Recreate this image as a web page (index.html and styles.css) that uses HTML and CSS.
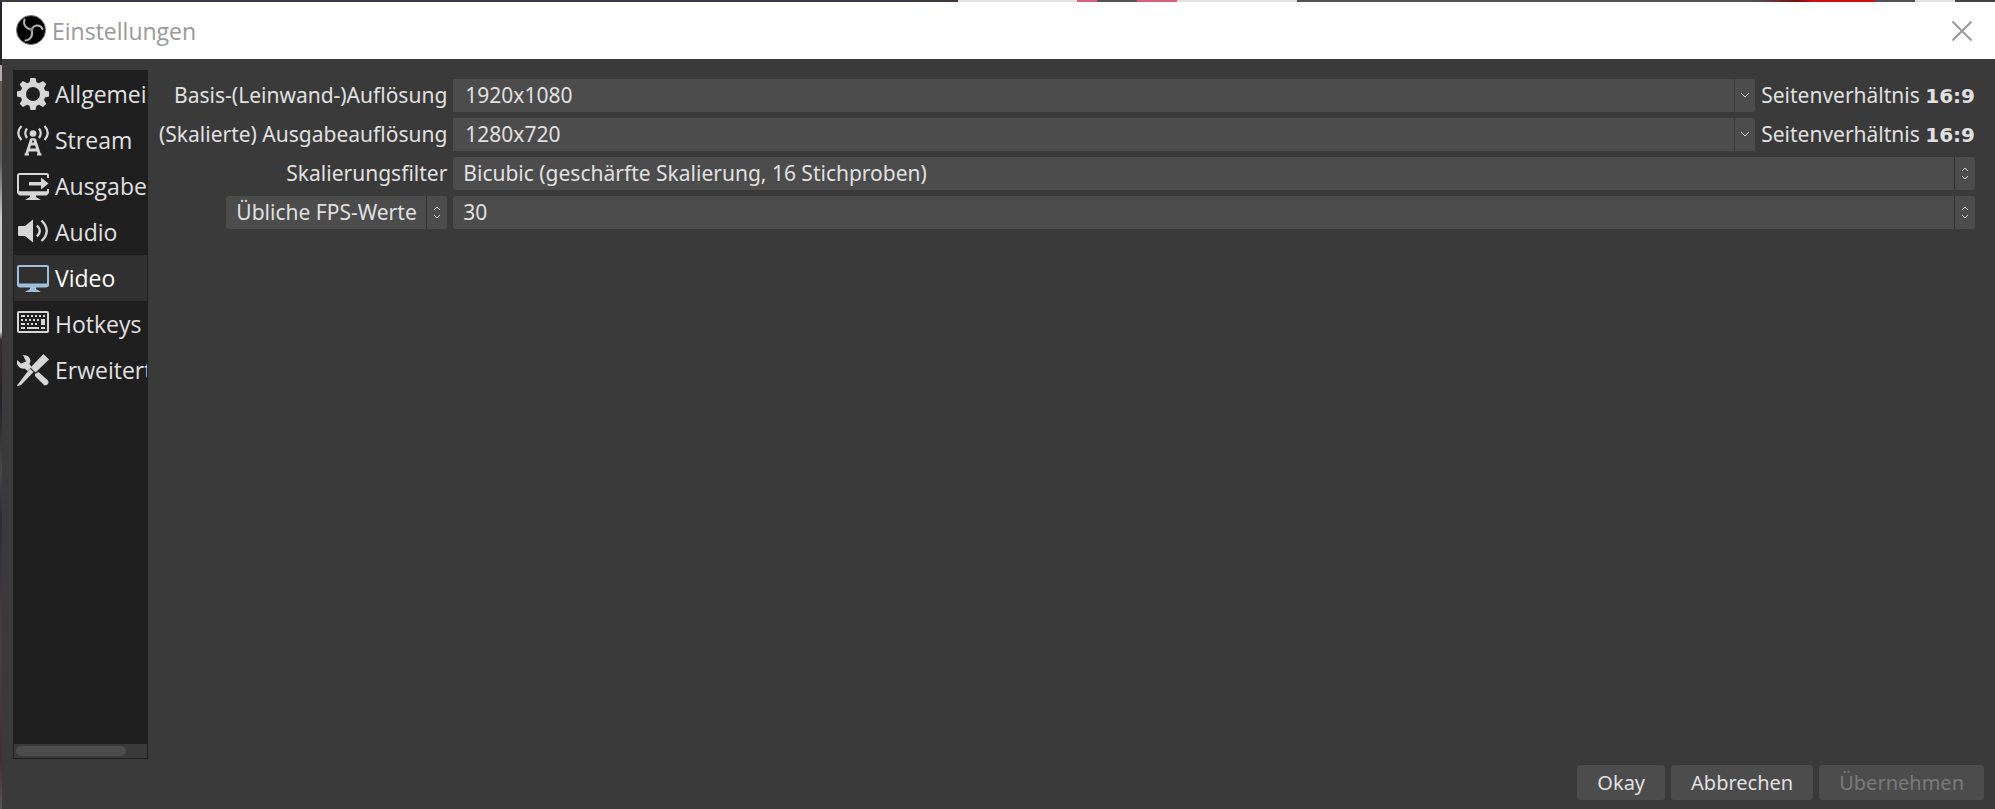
FILE: index.html
```html
<!DOCTYPE html>
<html lang="de">
<head>
  <meta charset="UTF-8" />
  <meta name="viewport" content="width=device-width, initial-scale=1.0"/>
  <title>Einstellungen</title>
  <link rel="stylesheet" href="styles.css">
</head>
<body>

  <header class="titlebar">
    <svg class="logo" viewBox="0 0 32 32" aria-hidden="true">
      <circle cx="16" cy="15" r="14.500" fill="#000" stroke="#777" stroke-width="1"/>
      <g fill="none" stroke="#b4b4b4" stroke-width="2" stroke-linecap="round">
        <path d="M9.500 4.500c-1.500 5 1 9 7 10"/>
        <path d="M27.500 14c-2-4.500-8-5-11 .5"/>
        <path d="M16.500 14.500c2 6-1 10.500-6 11"/>
      </g>
      <circle cx="16.500" cy="14.500" r="2" fill="#888"/>
    </svg>
    <h1>Einstellungen</h1>
    <button type="button" class="close" aria-label="Schließen">
      <svg viewBox="0 0 20 20"><path d="M.5.5l19 19M19.500.5l-19 19"/></svg>
    </button>
  </header>

  <div class="content">
    <nav class="sidebar">
      <ul>
        <li><a href="#allgemein">
          <svg viewBox="0 0 32 32">
            <path fill-rule="evenodd" d="M13.500 0h5l1 4.300 2.500 1L26 3l3.300 3.300L27 10l1 2.500 4 1v5l-4 1L27 22l2.300 3.700L26 29l-4-2.300-2.500 1-1 4.300h-5l-1-4.300-2.500-1L6 29l-3.300-3.300L5 22l-1-2.500-4-1v-5l4-1L5 10 2.700 6.300 6 3l4 2.300 2.500-1zM16 9a7 7 0 1 0 0 14 7 7 0 0 0 0-14z"/>
          </svg>Allgemein</a></li>
        <li><a href="#stream">
          <svg viewBox="0 0 32 32">
            <circle cx="16" cy="9.500" r="3.300"/>
            <path class="line" d="M14.500 15L9.500 30.500M17.500 15l5 15.500M13.500 20h5M12 26h8" stroke-width="2.800"/>
            <path class="line" d="M14 15.300h4M7.500 30.500h4.500M20 30.500h4.500" stroke-width="2"/>
            <path class="line" d="M10 4.500q-3.500 4.500 0 9.500M22 4.500q3.500 4.500 0 9.500M4.500 2q-6.500 7 0 14M27.500 2q6.500 7 0 14" stroke-width="2.200"/>
          </svg>Stream</a></li>
        <li><a href="#ausgabe">
          <svg viewBox="0 0 32 32">
            <path class="line" d="M31 8V5.500Q31 4 29.500 4h-27Q1 4 1 5.500v17h30V19" stroke-width="2"/>
            <path d="M1 21.500h30v2q0 2-2 2H3q-2 0-2-2zM13 25h6v2l5 3H8l5-3zM12 12h12V7.500l7.500 6-7.500 6V15.500H12z"/>
          </svg>Ausgabe</a></li>
        <li><a href="#audio">
          <svg viewBox="0 0 32 32">
            <path d="M1 11q0-1 1-1h6l8-6.500v23L8 20H2q-1 0-1-1z"/>
            <path class="line" d="M20 9.500q5.500 5.500 0 11M24.500 4.500q10.500 10.500 0 20.500" stroke-width="2.400"/>
          </svg>Audio</a></li>
        <li><a href="#video" class="active" aria-current="page">
          <svg viewBox="0 0 32 32">
            <rect class="line" x="1" y="4" width="30" height="20" rx="1" stroke-width="2"/>
            <path d="M1 21.500h30v2q0 2-2 2H3q-2 0-2-2zM13 25h6v2l5 3H8l5-3z"/>
          </svg>Video</a></li>
        <li><a href="#hotkeys">
          <svg viewBox="0 0 32 32">
            <rect class="line" x="1" y="4" width="30" height="20" rx="1" stroke-width="2"/>
            <path class="line" d="M4 8h4m2 0h2m2 0h2m2 0h2m2 0h2m2 0h2M4 12h2m2 0h2m2 0h2m2 0h2m2 0h2m2 0h2M4 16h4m2 0h2m2 0h2m2 0h2m4 0h2M4 20h4m2 0h12m2 0h4" stroke-width="2"/>
            <path d="M24 11h4v6h-4z"/>
          </svg>Hotkeys</a></li>
        <li><a href="#erweitert">
          <svg viewBox="0 0 32 32">
            <path d="M26.500 0L32 5.500l-13.500 13-5-5zM18 20l3.500-2L31 26.500q2 4-3.500 5l-9.500-9.500z"/>
            <path d="M13 14.500l3.500 3.500L4 31l-3.500 1L0 31.500z"/>
            <path d="M6 1q7 0 7.500 6l-1 3 2 3-4 4-3-2.500q-5 1-7.500-4.500V6l4 3.500 5-2z"/>
          </svg>Erweitert</a></li>
      </ul>
      <div class="scrollbar"><div class="thumb"></div></div>
    </nav>

    <form id="videoForm" class="settings">
      <label for="baseRes">Basis-(Leinwand-)Auflösung</label>
      <div class="row">
        <div class="combo">
          <input type="text" id="baseRes" value="1920x1080">
          <button type="button" aria-label="Auflösung auswählen"><svg viewBox="0 0 20 33"><path d="M6 14l4 4 4-4"/></svg></button>
        </div>
        <span>Seitenverhältnis <b>16:9</b></span>
      </div>

      <label for="outputRes">(Skalierte) Ausgabeauflösung</label>
      <div class="row">
        <div class="combo">
          <input type="text" id="outputRes" value="1280x720">
          <button type="button" aria-label="Auflösung auswählen"><svg viewBox="0 0 20 33"><path d="M6 14l4 4 4-4"/></svg></button>
        </div>
        <span>Seitenverhältnis <b>16:9</b></span>
      </div>

      <label for="filter">Skalierungsfilter</label>
      <div class="dropdown">
        <select id="filter">
          <option>Bicubic (geschärfte Skalierung, 16 Stichproben)</option>
        </select>
        <svg viewBox="0 0 20 33"><path d="M7 14l3-3 3 3M7 19l3 3 3-3"/></svg>
      </div>

      <div class="dropdown fps-type">
        <select id="fpsType" aria-label="FPS-Typ">
          <option>Übliche FPS-Werte</option>
        </select>
        <svg viewBox="0 0 20 33"><path d="M7 14l3-3 3 3M7 19l3 3 3-3"/></svg>
      </div>
      <div class="dropdown">
        <select id="fps" aria-label="FPS">
          <option>30</option>
        </select>
        <svg viewBox="0 0 20 33"><path d="M7 14l3-3 3 3M7 19l3 3 3-3"/></svg>
      </div>
    </form>
  </div>

  <footer class="buttons">
    <button type="submit" form="videoForm">Okay</button>
    <button type="button">Abbrechen</button>
    <button type="button" disabled>Übernehmen</button>
  </footer>

</body>
</html>
```
FILE: styles.css
```css
* {
  box-sizing: border-box;
}

/* the desktop shows through in a thin strip above and left of the window */
body {
  margin: 0;
  min-height: 100vh;
  display: flex;
  flex-direction: column;
  padding: 2px 0 0 2px;
  background-color: #3a3a3a;
  background-image:
    linear-gradient(to right, #3c3a44 0 45%, #44363c 48%, #e4e4e0 48% 54%, #d8607a 54% 55%, #55535a 55% 57%, #d8607a 57% 59%, #e0e0e0 59% 65%, #50505a 65% 88%, #7a1010 90%, #d01010 91% 94%, #50505a 94% 96%, #e0e0e0 96% 98%, #444 98%),
    linear-gradient(to bottom, #26242c 0 8%, #b8aaa0 8% 10%, #6a5a4e 10% 16%, #55605a 20%, #ccc 27% 41%, #3a2e2c 42%, #26222a 50%, #4a4547 58%, #2e2a3c 64%, #4a4040 80%, #4a2c30 94%, #555 100%);
  background-size: 100% 2px, 2px 100%;
  background-repeat: no-repeat;
  color: #e1e0e1;
  font-family: "Noto Sans", sans-serif;
  font-size: 21px;
}

button, input, select {
  font: inherit;
  color: inherit;
}

/* title bar */
.titlebar {
  display: flex;
  align-items: center;
  height: 57px;
  padding: 0 23px 0 13px;
  background-color: white;
}

.logo {
  width: 32px;
  height: 32px;
}

.titlebar h1 {
  flex: 1;
  margin: 0 0 0 5px;
  color: #999;
  font-family: "Open Sans", sans-serif;
  font-size: 23px;
  font-weight: normal;
}

.close {
  display: flex;
  padding: 0;
  border: none;
  background: none;
}

.close svg {
  width: 20px;
  height: 20px;
  stroke: #999;
  stroke-width: 2;
}

.content {
  flex: 1;
  display: flex;
  padding: 11px 20px 0 11px;
}

/* sidebar */
.sidebar {
  display: flex;
  flex-direction: column;
  width: 135px;
  border: 1px solid #1f1f1f;
  background-color: #1f1f1f;
  font-family: "Open Sans", sans-serif;
  font-size: 23px;
}

.sidebar ul {
  flex: 1;
  margin: 0;
  padding: 0;
  list-style: none;
  overflow: hidden;
}

.sidebar a {
  display: flex;
  align-items: center;
  gap: 6px;
  height: 46px;
  padding-left: 3px;
  color: #e1e0e1;
  text-decoration: none;
}

.sidebar a.active {
  background-color: #303030;
  color: white;
}

.sidebar svg {
  flex: none;
  width: 32px;
  height: 32px;
  fill: #d6d6d6;
  stroke: none;
}

.sidebar svg .line {
  fill: none;
  stroke: #d6d6d6;
}

.sidebar .active svg {
  fill: #a1bfdd;
}

.sidebar .active svg .line {
  stroke: #a1bfdd;
}

.scrollbar {
  height: 14px;
  padding: 2px;
  background-color: #3a3a3a;
}

.thumb {
  width: 85%;
  height: 10px;
  border-radius: 5px;
  background-color: #4c4c4c;
}

/* settings form */
.settings {
  flex: 1;
  display: grid;
  grid-template-columns: auto 1fr;
  grid-auto-rows: 33px;
  gap: 6px;
  padding: 9px 0 0 11px;
  line-height: 33px;
  white-space: nowrap;
}

.settings label {
  text-align: right;
}

.row {
  display: flex;
  gap: 6px;
}

.row b {
  font-family: "DejaVu Sans", sans-serif;
  font-size: 20px;
}

.combo {
  flex: 1;
  display: flex;
  gap: 1px;
}

.combo input {
  flex: 1;
  min-width: 0;
  padding: 0 12px;
  border: none;
  background-color: #4c4c4c;
}

.combo button {
  display: flex;
  width: 20px;
  padding: 0;
  border: none;
  border-radius: 0 3px 3px 0;
  background-color: #4c4c4c;
}

.settings svg {
  width: 20px;
  height: 33px;
  fill: none;
  stroke: #d6d6d6;
}

.dropdown {
  display: grid;
}

.dropdown select,
.dropdown svg {
  grid-area: 1 / 1;
}

.dropdown select {
  appearance: none;
  width: 100%;
  padding: 0 30px 0 10px;
  border: none;
  border-radius: 3px;
  background-color: #4c4c4c;
}

.dropdown svg {
  justify-self: end;
  box-sizing: content-box;
  border-left: 1px solid #303030;
  pointer-events: none;
}

.fps-type {
  justify-self: end;
}

/* bottom buttons */
.buttons {
  display: flex;
  justify-content: flex-end;
  gap: 6px;
  padding: 6px 11px 9px;
  font-size: 20px;
}

.buttons button {
  height: 35px;
  padding: 0 20px;
  border: none;
  border-radius: 3px;
  background-color: #4c4c4c;
}

.buttons button:disabled {
  color: #7a7a7a;
}
```
